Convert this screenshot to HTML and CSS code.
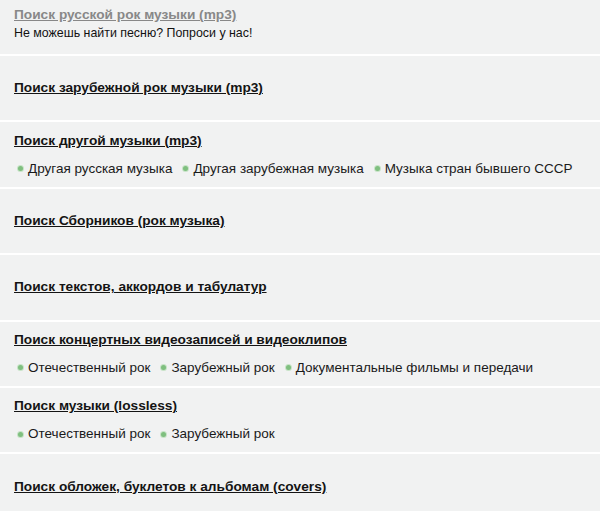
FILE: index.html
```html
<!DOCTYPE html>
<html lang="ru">
<head>
<meta charset="utf-8">
<title>Поиск музыки</title>
<link rel="stylesheet" href="styles.css">
</head>
<body>
<div class="list">
  <div class="row first">
    <a class="title visited" href="#">Поиск русской рок музыки (mp3)</a>
    <div class="note">Не можешь найти песню? Попроси у нас!</div>
  </div>
  <div class="row">
    <a class="title" href="#">Поиск зарубежной рок музыки (mp3)</a>
  </div>
  <div class="row">
    <a class="title" href="#">Поиск другой музыки (mp3)</a>
    <ul class="subs">
      <li>Другая русская музыка</li>
      <li>Другая зарубежная музыка</li>
      <li>Музыка стран бывшего СССР</li>
    </ul>
  </div>
  <div class="row">
    <a class="title" href="#">Поиск Сборников (рок музыка)</a>
  </div>
  <div class="row">
    <a class="title" href="#">Поиск текстов, аккордов и табулатур</a>
  </div>
  <div class="row">
    <a class="title" href="#">Поиск концертных видеозаписей и видеоклипов</a>
    <ul class="subs">
      <li>Отечественный рок</li>
      <li>Зарубежный рок</li>
      <li>Документальные фильмы и передачи</li>
    </ul>
  </div>
  <div class="row">
    <a class="title" href="#">Поиск музыки (lossless)</a>
    <ul class="subs">
      <li>Отечественный рок</li>
      <li>Зарубежный рок</li>
    </ul>
  </div>
  <div class="row last">
    <a class="title" href="#">Поиск обложек, буклетов к альбомам (covers)</a>
  </div>
</div>
</body>
</html>
```
FILE: styles.css
```css
html, body {
  margin: 0;
  padding: 0;
  background: #f1f2f2;
}
body {
  width: 600px;
  height: 511px;
  overflow: hidden;
  font-family: "Liberation Sans", Arial, sans-serif;
  font-size: 13px;
  color: #111;
}
.list {
  display: flex;
  flex-direction: column;
}
.row {
  height: 64.4px;
  border-bottom: 2px solid #ffffff;
  display: flex;
  flex-direction: column;
  justify-content: center;
  padding: 0 14px;
  gap: 12px;
}
.row.first {
  height: 56px;
  padding-bottom: 6px;
  box-sizing: border-box;
  gap: 2px;
}
.row.last {
  border-bottom: none;
}
.title {
  font-size: 13.7px;
  font-weight: bold;
  color: #141414;
  text-decoration: underline;
  line-height: 16px;
  align-self: flex-start;
}
.title.visited {
  color: #888888;
}
.note {
  font-size: 12.4px;
  line-height: 16px;
  color: #111;
}
.subs {
  list-style: none;
  margin: 0;
  padding: 0 0 0 4px;
  display: flex;
  gap: 11px;
  font-size: 13.5px;
  line-height: 16px;
  color: #1a1a1a;
}
.subs li {
  display: flex;
  align-items: center;
  gap: 5px;
}
.subs li::before {
  content: "";
  width: 5px;
  height: 5px;
  border-radius: 50%;
  background: #7fbf7f;
  box-shadow: 0 0 0 1px #c7e3c7;
}
```
